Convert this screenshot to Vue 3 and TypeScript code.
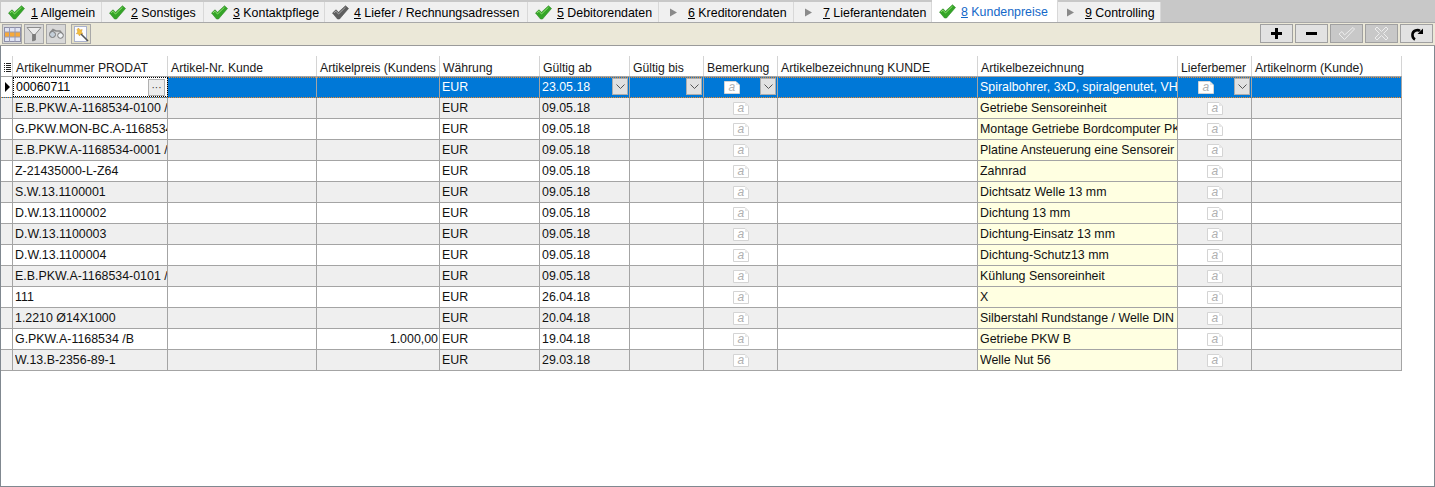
<template>
  <div class="page">
    <nav class="tabs">
      <div v-for="t in tabs" :key="t.no" class="tab" :class="{ active: t.no === 8 }">
        <span class="tab-icon">
          <svg v-if="t.state !== 'open'" width="17" height="15" viewBox="0 0 17 15">
            <path d="M0.5 8 L4 4.8 L6.5 7.2 L13.5 0.8 L16.5 3.5 L7.5 14 L5.5 14 Z" :fill="t.state === 'done' ? '#35a528' : '#5e5e5e'" :stroke="t.state === 'done' ? '#2b8a22' : '#4e4e4e'" stroke-width="0.6" />
            <path d="M2 7.8 L4 6.2 L6.5 9 L13.5 2.2" fill="none" :stroke="t.state === 'done' ? '#8fe070' : '#a8a8a8'" stroke-width="1" />
          </svg>
          <svg v-else width="17" height="15" viewBox="0 0 17 15">
            <path d="M4 3.5 L11 7.5 L4 11.5 Z" fill="#8a8a8a" />
          </svg>
        </span>
        <span class="tab-label"><u>{{ t.no }}</u> {{ t.label }}</span>
      </div>
    </nav>

    <div class="toolbar">
      <div class="tools-left">
        <button class="tool">
          <svg width="17" height="15" viewBox="0 0 17 15">
            <rect x="0.5" y="0.5" width="16" height="14" fill="#dfe3f3" stroke="#8d8fa8" />
            <rect x="1" y="5" width="15" height="5" fill="#f6a93b" />
            <path d="M5.5 0 V15 M11 0 V15 M0 5 H17 M0 10 H17" stroke="#9a9ab0" />
          </svg>
        </button>
        <button class="tool">
          <svg width="16" height="16" viewBox="0 0 16 16">
            <path d="M1 1.5 H15 L9.5 8 V14 L6.5 15 V8 Z" fill="#ececec" stroke="#8c8c8c" />
            <path d="M6.5 8 V15 L9.5 14 V8 Z" fill="#7c7c7c" />
          </svg>
        </button>
        <button class="tool">
          <svg width="17" height="12" viewBox="0 0 17 12">
            <path d="M2 5 L5 1.5 L8 3 L12 3 L15 7" fill="none" stroke="#8a8a8a" stroke-width="1.6" />
            <circle cx="4.5" cy="6.5" r="3" fill="#c4ced8" stroke="#777" />
            <circle cx="12.5" cy="7.5" r="2.8" fill="#eef1f4" stroke="#777" />
          </svg>
        </button>
        <button class="tool wand">
          <svg width="16" height="18" viewBox="0 0 16 18">
            <rect x="1.5" y="1.5" width="12" height="15" fill="#fbfcff" stroke="#a9b1cc" />
            <path d="M5.5 3 L6.8 5 L9.2 4.6 L8.4 7 L10 8.6 L7.6 9 L6.5 11 L5.5 9 L3.2 8.6 L4.8 7 L4 4.6 Z" fill="#f3bf3c" stroke="#cf9330" stroke-width="0.5" />
            <path d="M8 9 L15 16" stroke="#555" stroke-width="1.6" />
          </svg>
        </button>
      </div>
      <div class="tools-right">
        <button class="act">
          <svg width="13" height="13" viewBox="0 0 13 13"><path d="M5 1 H8 V5 H12 V8 H8 V12 H5 V8 H1 V5 H5 Z" fill="#000" /></svg>
        </button>
        <button class="act">
          <svg width="13" height="13" viewBox="0 0 13 13"><rect x="1" y="5" width="11" height="3" fill="#000" /></svg>
        </button>
        <button class="act off">
          <svg width="19" height="15" viewBox="0 0 19 15"><path d="M2 8 L5 5.5 L7.5 9 L16 1.5 L17.5 3 L7.5 13.5 Z" fill="#c8c8c8" stroke="#ededed" /></svg>
        </button>
        <button class="act off">
          <svg width="15" height="15" viewBox="0 0 15 15"><path d="M1 3 L3 1 L7.5 5.5 L12 1 L14 3 L9.5 7.5 L14 12 L12 14 L7.5 9.5 L3 14 L1 12 L5.5 7.5 Z" fill="#c8c8c8" stroke="#ededed" /></svg>
        </button>
        <button class="act">
          <svg width="14" height="14" viewBox="0 0 14 14">
            <path d="M5 12.5 C1.5 10.5 1.5 5 5.5 3.5 C7.5 2.8 9 3.2 10 4" fill="none" stroke="#000" stroke-width="2.6" />
            <path d="M7.5 7 L13 7 L13 1.5 Z" fill="#000" />
          </svg>
        </button>
      </div>
    </div>

    <section class="panel">
      <div class="row head">
        <div class="cell marker">
          <svg width="7" height="9" viewBox="0 0 7 9"><path d="M0 0 H1 V1 H0 Z M0 2 H1 V3 H0 Z M0 4 H1 V5 H0 Z M0 6 H1 V7 H0 Z M0 8 H1 V9 H0 Z M2 0 H7 V1 H2 Z M2 2 H7 V3 H2 Z M2 4 H7 V5 H2 Z M2 6 H7 V7 H2 Z M2 8 H7 V9 H2 Z" fill="#222" /></svg>
        </div>
        <div v-for="h in headers" :key="h" class="cell hcell">{{ h }}</div>
      </div>

      <div v-for="(r, i) in rows" :key="i" class="row" :class="{ sel: i === 0, alt: i % 2 === 1 }">
        <div class="cell marker">
          <svg v-if="i === 0" width="5" height="10" viewBox="0 0 5 10"><path d="M0 0 L5 5 L0 10 Z" fill="#000" /></svg>
        </div>
        <div class="cell txt first">
          <span class="clip">{{ r.nr }}</span>
          <span v-if="i === 0" class="more">···</span>
        </div>
        <div class="cell"></div>
        <div class="cell txt price">{{ r.price }}</div>
        <div class="cell txt">EUR</div>
        <div class="cell txt">
          <span class="clip">{{ r.date }}</span>
          <span v-if="i === 0" class="drop"><svg width="9" height="5" viewBox="0 0 9 5"><path d="M0.5 0.5 L4.5 4.5 L8.5 0.5" fill="none" stroke="#555" /></svg></span>
        </div>
        <div class="cell">
          <span v-if="i === 0" class="drop"><svg width="9" height="5" viewBox="0 0 9 5"><path d="M0.5 0.5 L4.5 4.5 L8.5 0.5" fill="none" stroke="#555" /></svg></span>
        </div>
        <div class="cell note-cell">
          <svg width="16" height="13" viewBox="0 0 16 13">
            <path d="M0.5 0.5 H12 L15.5 4 V12.5 H0.5 Z" fill="#fff" stroke="#d4d4d4" />
            <path d="M12 1 V4 H15 Z" fill="#e6e6e6" />
            <text x="4.5" y="10" class="note-a">a</text>
          </svg>
          <span v-if="i === 0" class="drop"><svg width="9" height="5" viewBox="0 0 9 5"><path d="M0.5 0.5 L4.5 4.5 L8.5 0.5" fill="none" stroke="#555" /></svg></span>
        </div>
        <div class="cell"></div>
        <div class="cell txt desc"><span class="clip">{{ r.desc }}</span></div>
        <div class="cell note-cell">
          <svg width="16" height="13" viewBox="0 0 16 13">
            <path d="M0.5 0.5 H12 L15.5 4 V12.5 H0.5 Z" fill="#fff" stroke="#d4d4d4" />
            <path d="M12 1 V4 H15 Z" fill="#e6e6e6" />
            <text x="4.5" y="10" class="note-a">a</text>
          </svg>
          <span v-if="i === 0" class="drop"><svg width="9" height="5" viewBox="0 0 9 5"><path d="M0.5 0.5 L4.5 4.5 L8.5 0.5" fill="none" stroke="#555" /></svg></span>
        </div>
        <div class="cell"></div>
      </div>
    </section>
  </div>
</template>

<script setup lang="ts">
interface Tab {
  no: number
  label: string
  state: 'done' | 'gray' | 'open'
}

interface Row {
  nr: string
  date: string
  desc: string
  price?: string
}

const tabs: Tab[] = [
  { no: 1, label: 'Allgemein', state: 'done' },
  { no: 2, label: 'Sonstiges', state: 'done' },
  { no: 3, label: 'Kontaktpflege', state: 'done' },
  { no: 4, label: 'Liefer / Rechnungsadressen', state: 'gray' },
  { no: 5, label: 'Debitorendaten', state: 'done' },
  { no: 6, label: 'Kreditorendaten', state: 'open' },
  { no: 7, label: 'Lieferantendaten', state: 'open' },
  { no: 8, label: 'Kundenpreise', state: 'done' },
  { no: 9, label: 'Controlling', state: 'open' }
]

const headers = [
  'Artikelnummer PRODAT',
  'Artikel-Nr. Kunde',
  'Artikelpreis (Kundens',
  'Währung',
  'Gültig ab',
  'Gültig bis',
  'Bemerkung',
  'Artikelbezeichnung KUNDE',
  'Artikelbezeichnung',
  'Lieferbemer',
  'Artikelnorm (Kunde)'
]

const rows: Row[] = [
  { nr: '00060711', date: '23.05.18', desc: 'Spiralbohrer, 3xD, spiralgenutet, VH' },
  { nr: 'E.B.PKW.A-1168534-0100 /', date: '09.05.18', desc: 'Getriebe Sensoreinheit' },
  { nr: 'G.PKW.MON-BC.A-1168534', date: '09.05.18', desc: 'Montage Getriebe Bordcomputer PK' },
  { nr: 'E.B.PKW.A-1168534-0001 /', date: '09.05.18', desc: 'Platine Ansteuerung eine Sensoreir' },
  { nr: 'Z-21435000-L-Z64', date: '09.05.18', desc: 'Zahnrad' },
  { nr: 'S.W.13.1100001', date: '09.05.18', desc: 'Dichtsatz Welle 13 mm' },
  { nr: 'D.W.13.1100002', date: '09.05.18', desc: 'Dichtung 13 mm' },
  { nr: 'D.W.13.1100003', date: '09.05.18', desc: 'Dichtung-Einsatz 13 mm' },
  { nr: 'D.W.13.1100004', date: '09.05.18', desc: 'Dichtung-Schutz13 mm' },
  { nr: 'E.B.PKW.A-1168534-0101 /', date: '09.05.18', desc: 'Kühlung Sensoreinheit' },
  { nr: '111', date: '26.04.18', desc: 'X' },
  { nr: '1.2210 Ø14X1000', date: '20.04.18', desc: 'Silberstahl Rundstange / Welle DIN' },
  { nr: 'G.PKW.A-1168534 /B', date: '19.04.18', desc: 'Getriebe PKW B', price: '1.000,00' },
  { nr: 'W.13.B-2356-89-1', date: '29.03.18', desc: 'Welle Nut 56' }
]
</script>

<style>
html,
body {
  margin: 0;
  background: #fff;
}
</style>

<style scoped>
.page {
  width: 1435px;
  height: 487px;
  display: flex;
  flex-direction: column;
  font-family: 'Liberation Sans', Arial, sans-serif;
  font-size: 12.4px;
  color: #000;
  overflow: hidden;
}

.tabs {
  height: 22px;
  flex: none;
  display: grid;
  grid-template-columns: 101px 102px 121px 203px 131px 135px 138px 126px 103px;
  padding-left: 1px;
  background: #c8c8c8;
  box-sizing: border-box;
}

.tab {
  margin-top: 2px;
  display: flex;
  align-items: center;
  padding-left: 7px;
  background: #f0f0f0;
  border-right: 1px solid #d8d8d8;
  white-space: nowrap;
  overflow: hidden;
  font-size: 12.4px;
}

.tab:last-child {
  padding-left: 5px;
}

.tab.active {
  margin-top: 0;
  background: #fff;
  color: #1468c8;
}

.tab-icon {
  width: 22px;
  flex: none;
  display: flex;
}

.tab:first-child .tab-icon {
  width: 23px;
}

.tab-label {
  padding-top: 1px;
}

.toolbar {
  height: 22px;
  flex: none;
  display: flex;
  justify-content: space-between;
  background: #ebe8d8;
  border-top: 1px solid #a8a8a8;
  border-bottom: 1px solid #9a9a9a;
}

.tools-left {
  display: flex;
  padding: 1px 0 0 2px;
  gap: 2px;
}

.tool {
  width: 20px;
  height: 20px;
  padding: 0;
  display: flex;
  align-items: center;
  justify-content: center;
  background: #d8d8d8;
  border: 1px solid #a8a8a8;
}

.tool.wand {
  margin-left: 3px;
  background: #e4e0c8;
}

.tools-right {
  display: flex;
  gap: 2px;
  padding: 1px 2px 0 0;
}

.act {
  width: 33px;
  height: 19px;
  padding: 0;
  display: flex;
  align-items: center;
  justify-content: center;
  background: #e2e2e2;
  border: 1px solid #a0a0a0;
}

.act.off {
  background: #c8c8c8;
}

.panel {
  flex: 1;
  background: #fff;
  border: 1px solid #808890;
  border-width: 0 1px 1px 1px;
}

.row {
  display: grid;
  grid-template-columns: 12px 155px 149px 123px 100px 90px 74px 74px 200px 200px 74px 150px;
  width: 1401px;
  height: 21px;
  box-sizing: border-box;
  border-bottom: 1px solid #a4a4a4;
}

.row.alt {
  background: #efefef;
}

.cell {
  display: flex;
  align-items: center;
  min-width: 0;
  overflow: hidden;
  white-space: nowrap;
  box-sizing: border-box;
  border-right: 1px solid #a4a4a4;
  position: relative;
}

.row.head {
  height: 31px;
  background: #fff;
  font-size: 12.2px;
}

.head .cell {
  align-items: flex-end;
  padding: 0 0 1px 3px;
  margin-top: 10px;
  border-right-color: #d4d4d4;
  color: #1a1a1a;
}

.head .marker {
  padding: 0 0 4px 3px;
}

.marker {
  padding-left: 4px;
}

.txt {
  padding-left: 2px;
  color: #111;
}

.clip {
  overflow: hidden;
  flex: 1;
}

.price {
  justify-content: flex-end;
  padding-right: 1px;
}

.desc {
  background: #ffffe1;
}

.note-cell {
  justify-content: center;
}

.note-a {
  font-family: 'Liberation Sans', Arial, sans-serif;
  font-size: 12px;
  font-style: italic;
  fill: #b0b0b0;
}

.row.sel {
  background: #0078d7;
  outline: 1px dotted #f08a2c;
  outline-offset: -1px;
  border-bottom: 1px dotted #f08a2c;
}

.sel .marker {
  background: #fff;
  padding-left: 4px;
}

.sel .cell {
  color: #fff;
}

.sel .desc {
  background: #0078d7;
}

.sel .first {
  background: #fff;
  color: #000;
  padding-left: 3px;
  outline: 1px dotted #000;
  outline-offset: -1px;
}

.sel .note-cell {
  justify-content: flex-start;
  padding-left: 20px;
}

.more {
  flex: none;
  width: 15px;
  height: 15px;
  margin-right: 2px;
  display: flex;
  align-items: center;
  justify-content: center;
  background: #ececec;
  border: 1px solid #b0b0b0;
  color: #333;
  font-size: 10px;
}

.drop {
  position: absolute;
  right: 1px;
  top: 1px;
  width: 16px;
  height: 17px;
  display: flex;
  align-items: center;
  justify-content: center;
  box-sizing: border-box;
  background: #e1e1e1;
  border: 1px solid #adadad;
}
</style>
